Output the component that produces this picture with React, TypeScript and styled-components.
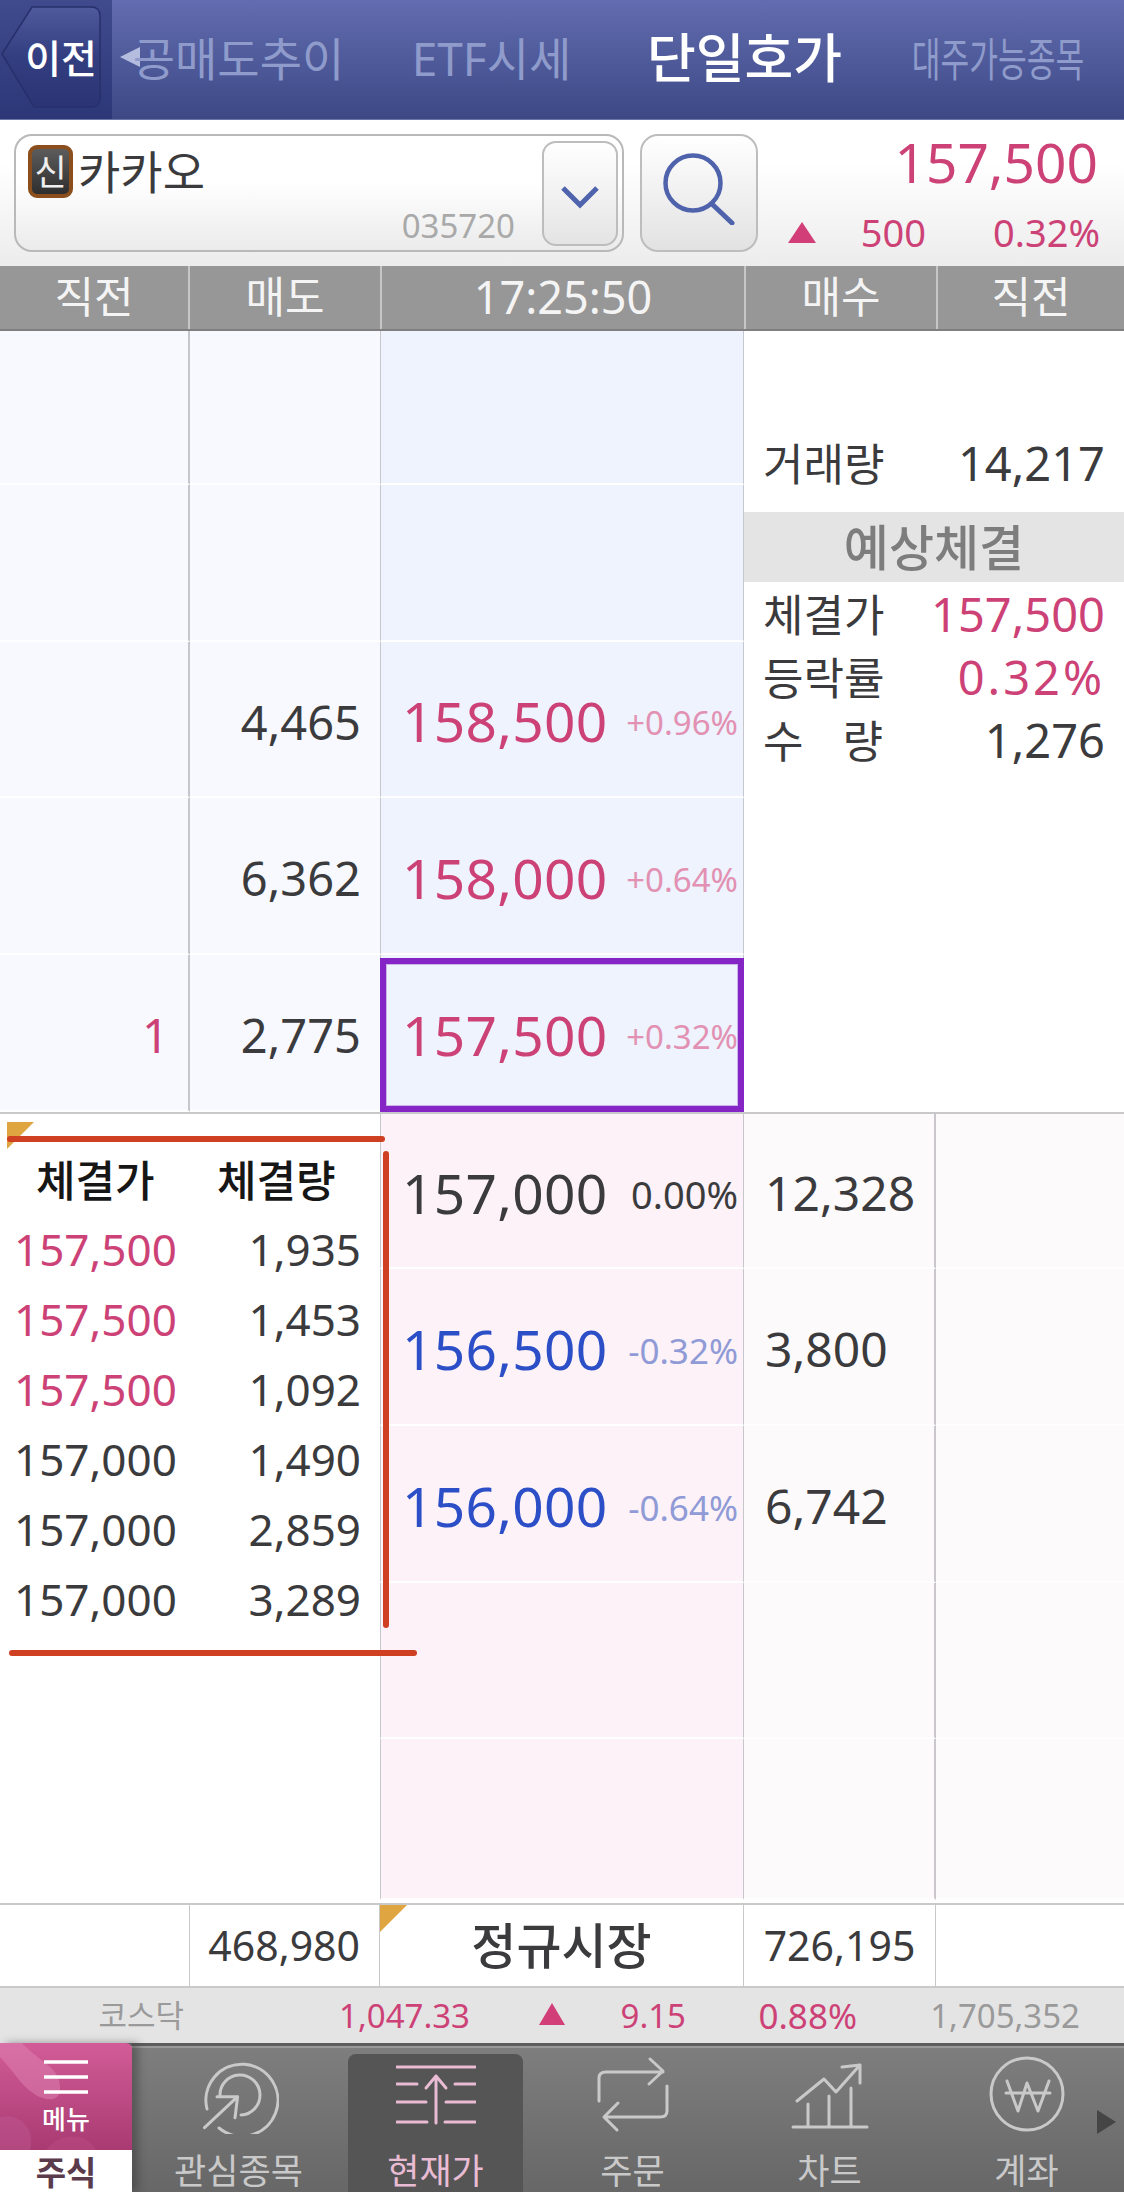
import React from "react";
import styled, { createGlobalStyle } from "styled-components";

const PINK = "#cd4276";
const BLUE = "#2c4fc8";
const INK = "#3b3b3d";
const GRID = "190px 190px 364px 192px 188px";

const GlobalStyle = createGlobalStyle`
  html, body {
    margin: 0;
    padding: 0;
    background: #fff;
  }
  * {
    box-sizing: border-box;
  }
`;

const Page = styled.div`
  width: 1124px;
  height: 2192px;
  overflow: hidden;
  display: flex;
  flex-direction: column;
  font-family: "Noto Sans", "Noto Sans CJK KR", sans-serif;
  color: ${INK};
`;

/* top tabs */
const TopNav = styled.div`
  height: 120px;
  flex: none;
  display: grid;
  grid-template-columns: 112px repeat(4, 253px);
  background: linear-gradient(#626cb0, #3c4985);
  border-bottom: 1px solid #6d76a8;
`;
const BackCell = styled.div`
  position: relative;
  display: flex;
  align-items: center;
  justify-content: flex-end;
  padding: 0 15px 5px 0;
  background: linear-gradient(#3f4b8c, #2c3778);
`;
const BackShape = styled.svg`
  position: absolute;
  left: 0;
  top: 0;
`;
const BackLabel = styled.span`
  position: relative;
  font-size: 39px;
  font-weight: 500;
  color: #fff;
  line-height: 1;
  white-space: nowrap;
`;
const NavItem = styled.div`
  position: relative;
  display: flex;
  align-items: center;
  justify-content: center;
  padding-bottom: 4px;
`;
const NavLabel = styled.span<{ $active?: boolean; $squeeze?: number }>`
  display: inline-block;
  white-space: nowrap;
  line-height: 1;
  font-size: ${(p) => (p.$active ? 53 : 46)}px;
  font-weight: ${(p) => (p.$active ? 500 : 400)};
  color: ${(p) => (p.$active ? "#fff" : "#8f9bcb")};
  transform: scaleX(${(p) => p.$squeeze ?? 1});
`;
const NavArrow = styled.i`
  position: absolute;
  left: 8px;
  top: 47px;
  width: 0;
  height: 0;
  border-style: solid;
  border-width: 10px 20px 10px 0;
  border-color: transparent rgba(215, 222, 245, 0.75) transparent transparent;
`;

/* search row */
const SearchBar = styled.div`
  height: 146px;
  flex: none;
  display: flex;
  padding: 14px 0 0 14px;
  background: linear-gradient(#fff 30%, #ececec);
`;
const StockBox = styled.div`
  position: relative;
  width: 610px;
  height: 118px;
  border: 2px solid #b9b9b9;
  border-radius: 18px;
  background: linear-gradient(#fff 40%, #ebebeb);
  display: flex;
`;
const StockMain = styled.div`
  flex: 1;
  display: flex;
  flex-direction: column;
  padding: 8px 0 0 12px;
`;
const StockName = styled.div`
  display: flex;
  align-items: center;
  gap: 5px;
  font-size: 46px;
  line-height: 54px;
`;
const CreditBadge = styled.span`
  width: 45px;
  height: 53px;
  display: flex;
  align-items: center;
  justify-content: center;
  border: 4px solid #8a4f1d;
  border-radius: 9px;
  background: linear-gradient(#5c5c5c, #2e2e2e);
  color: #eee;
  font-size: 35px;
  line-height: 1;
`;
const StockCode = styled.div`
  margin-top: 9px;
  padding-right: 27px;
  text-align: right;
  font-size: 33px;
  line-height: 38px;
  color: #a9a9a9;
`;
const ExpandButton = styled.div`
  width: 76px;
  height: 105px;
  margin: 5px 4px 0 0;
  border: 2px solid #bdbdbd;
  border-radius: 14px;
  background: linear-gradient(#fff, #e4e4e4);
  display: flex;
  align-items: center;
  justify-content: center;
  padding-top: 6px;
`;
const SearchButton = styled.div`
  width: 118px;
  height: 118px;
  margin-left: 16px;
  border: 2px solid #bdbdbd;
  border-radius: 18px;
  background: linear-gradient(#fff, #e2e2e2);
  display: flex;
  align-items: center;
  justify-content: center;
  padding-bottom: 8px;
`;
const Quote = styled.div`
  flex: 1;
  display: flex;
  flex-direction: column;
  color: ${PINK};
`;
const QuotePrice = styled.div`
  margin-top: -2px;
  padding-right: 26px;
  text-align: right;
  font-size: 55px;
  line-height: 60px;
`;
const QuoteChange = styled.div`
  display: grid;
  grid-template-columns: 28px 110px 174px;
  margin: 18px 0 0 30px;
  align-items: center;
  font-size: 38px;
  line-height: 44px;
  text-align: right;
`;
const Triangle = styled.i<{ $w: number; $h: number }>`
  display: block;
  width: 0;
  height: 0;
  border-style: solid;
  border-width: 0 ${(p) => p.$w / 2}px ${(p) => p.$h}px;
  border-color: transparent transparent #d23f78;
`;

/* table head */
const HeadRow = styled.div`
  height: 65px;
  flex: none;
  display: grid;
  grid-template-columns: 188px 192px 364px 192px 188px;
  background: #979797;
  border-bottom: 2px solid #7f7f7f;
`;
const HeadCell = styled.div`
  display: flex;
  align-items: center;
  justify-content: center;
  color: #f4f4f4;
  font-size: 43px;
  line-height: 1;
  border-left: 2px solid #c6c6c8;
  padding-bottom: 2px;
  &:first-child {
    border-left: 0;
  }
`;
const Clock = styled.span`
  font-size: 45px;
`;

/* ask side */
const AskBoard = styled.div`
  height: 783px;
  flex: none;
  display: grid;
  grid-template-columns: ${GRID};
  grid-template-rows: 154px 157px 156px 157px 157px;
  border-bottom: 2px solid #c9c9c9;
`;
const QtyCell = styled.div<{ $color?: string; $rule?: boolean }>`
  display: flex;
  align-items: center;
  justify-content: flex-end;
  padding: 6px 19px 0 0;
  background: #f7f9fe;
  border-right: ${(p) => (p.$rule ? "2px solid #c6c7cc" : "0")};
  border-bottom: 2px solid #fff;
  color: ${(p) => p.$color ?? INK};
  font-size: 47px;
  line-height: 1;
`;
const PriceCell = styled.div<{ $tone: string; $current?: boolean }>`
  position: relative;
  display: flex;
  align-items: center;
  justify-content: space-between;
  padding: 3px 5px 0 21px;
  background: ${(p) => p.$tone};
  border-left: 1px solid #c6c7cc;
  border-right: 1px solid #c6c7cc;
  border-bottom: 2px solid #fff;
  ${(p) =>
    p.$current &&
    `&::after {
      content: "";
      position: absolute;
      inset: 3px -1px -2px -1px;
      border: 6px solid #8625c5;
      box-shadow: inset 0 0 0 1px #cbb4ea;
    }`}
`;
const Price = styled.span<{ $color: string }>`
  color: ${(p) => p.$color};
  font-size: 55px;
  line-height: 1;
  letter-spacing: 0.3px;
`;
const Rate = styled.span<{ $color: string; $size: number }>`
  color: ${(p) => p.$color};
  font-size: ${(p) => p.$size}px;
  line-height: 1;
  padding-top: 4px;
`;
const SidePanel = styled.div`
  grid-column: 4 / 6;
  grid-row: 1 / 6;
  display: flex;
  flex-direction: column;
  background: #fff;
  padding-top: 101px;
`;
const SideRow = styled.div`
  display: flex;
  justify-content: space-between;
  align-items: center;
  height: 63px;
  padding: 0 19px;
  font-size: 44px;
  line-height: 1;
`;
const SpreadLabel = styled.span`
  width: 120px;
  display: flex;
  justify-content: space-between;
`;
const SideValue = styled.span<{ $pink?: boolean; $spread?: boolean }>`
  font-size: 47px;
  letter-spacing: ${(p) => (p.$spread ? "3px" : "0")};
  color: ${(p) => (p.$pink ? PINK : INK)};
`;
const SideBand = styled.div`
  height: 70px;
  margin: 17px 0 1px;
  display: flex;
  align-items: center;
  justify-content: center;
  background: #e4e4e4;
  color: #7d7d7d;
  font-size: 49px;
  font-weight: 500;
  line-height: 1;
`;

/* bid side */
const BidBoard = styled.div`
  height: 789px;
  flex: none;
  display: grid;
  grid-template-columns: 380px 364px 192px 188px;
  grid-template-rows: 155px 157px 157px 156px 161px;
`;
const TickPanel = styled.div`
  grid-column: 1;
  grid-row: 1 / 6;
  position: relative;
  background: #fff;
  padding: 40px 19px 0 14px;
`;
const TickHead = styled.div`
  display: grid;
  grid-template-columns: 22px 181px 1fr;
  height: 52px;
  align-items: center;
  color: #161616;
  font-size: 43px;
  font-weight: 500;
  line-height: 1;
  margin-bottom: 8px;
  white-space: nowrap;
`;
const TickRow = styled.div`
  display: flex;
  justify-content: space-between;
  align-items: center;
  height: 70px;
  font-size: 44px;
  line-height: 1;
`;
const TickPrice = styled.span<{ $pink: boolean }>`
  color: ${(p) => (p.$pink ? PINK : INK)};
`;
const Mark = styled.i`
  position: absolute;
  display: block;
  z-index: 3;
  background: #cf3f22;
  border-radius: 3px;
`;
const MarkTop = styled(Mark)`
  left: 7px;
  top: 22px;
  width: 378px;
  height: 6px;
`;
const MarkRight = styled(Mark)`
  left: 383px;
  top: 37px;
  width: 6px;
  height: 477px;
`;
const MarkBottom = styled(Mark)`
  left: 9px;
  top: 536px;
  width: 408px;
  height: 6px;
`;
const Corner = styled.i`
  position: absolute;
  width: 0;
  height: 0;
  border-style: solid;
  border-width: 27px 27px 0 0;
  border-color: #dfa540 transparent transparent transparent;
`;
const TickCorner = styled(Corner)`
  left: 7px;
  top: 8px;
`;
const BidQtyCell = styled.div`
  display: flex;
  align-items: center;
  padding: 4px 0 0 21px;
  background: #fdfafc;
  border-bottom: 2px solid #fffefe;
  border-right: 2px solid #cbc6cc;
  font-size: 48px;
  line-height: 1;
`;
const BidSpareCell = styled.div`
  background: #fdfafc;
  border-bottom: 2px solid #fffefe;
`;

/* totals */
const TotalRow = styled.div`
  height: 85px;
  flex: none;
  display: grid;
  grid-template-columns: ${GRID};
  border-top: 2px solid #c9c9c9;
  border-bottom: 2px solid #c9c9c9;
`;
const TotalCell = styled.div<{ $sell?: boolean }>`
  position: relative;
  display: flex;
  align-items: center;
  justify-content: ${(p) => (p.$sell ? "flex-end" : "center")};
  padding-right: ${(p) => (p.$sell ? "19px" : "0")};
  border-right: 1px solid #c9c9c9;
  font-size: 41px;
  line-height: 1;
  &:last-child {
    border-right: 0;
  }
`;
const MarketName = styled.span`
  font-size: 49px;
  font-weight: 500;
`;
const TotalCorner = styled(Corner)`
  left: 0;
  top: 0;
`;

/* index strip */
const IndexBar = styled.div`
  height: 55px;
  flex: none;
  display: grid;
  grid-template-columns: 184px 286px 95px 121px 171px 223px;
  align-items: center;
  background: #e4e4e4;
  font-size: 33px;
  line-height: 1;
  text-align: right;
  color: ${PINK};
`;
const IndexMuted = styled.span<{ $size?: number }>`
  color: #9a9a9a;
  font-size: ${(p) => p.$size ?? 33}px;
`;
const IndexRate = styled.span`
  font-size: 35px;
`;
const IndexMark = styled.span`
  display: flex;
  justify-content: flex-end;
  padding-bottom: 4px;
`;

/* bottom tabs */
const TabBar = styled.div`
  position: relative;
  flex: 1;
  display: flex;
  background: linear-gradient(#7e7e7e, #676767);
  border-top: 3px solid #5d5d5d;
  box-shadow: inset 0 2px 0 #9a9a9a;
`;
const MenuBlock = styled.div`
  width: 132px;
  margin-top: -3px;
  flex: none;
  display: flex;
  flex-direction: column;
  box-shadow: 6px 0 8px rgba(50, 50, 50, 0.45);
  z-index: 1;
`;
const MenuButton = styled.div`
  position: relative;
  height: 107px;
  display: flex;
  flex-direction: column;
  align-items: center;
  overflow: hidden;
  background: linear-gradient(#d25c97, #a93a72);
  color: #fff;
  padding-top: 17px;
  border-radius: 0 6px 0 0;
`;
const MenuSwirl = styled.svg`
  position: absolute;
  left: 0;
  top: 0;
`;
const MenuLines = styled.svg`
  position: relative;
  display: block;
`;
const MenuLabel = styled.span`
  position: relative;
  margin-top: 12px;
  font-size: 26px;
  font-weight: 500;
  line-height: 1;
`;
const StockTab = styled.div`
  flex: 1;
  display: flex;
  justify-content: center;
  align-items: center;
  padding-top: 2px;
  background: #fff;
  color: #5a3a4b;
  font-size: 33px;
  font-weight: 700;
  line-height: 1;
`;
const TabList = styled.div`
  display: grid;
  grid-template-columns: repeat(5, 197px);
  padding-left: 8px;
`;
const TabItem = styled.div<{ $active?: boolean }>`
  position: relative;
  display: flex;
  flex-direction: column;
  align-items: center;
  padding-top: 8px;
  color: ${(p) => (p.$active ? "#e9bcd4" : "#c9c9c9")};
  font-size: 35px;
  line-height: 1;
  ${(p) =>
    p.$active &&
    `&::before {
      content: "";
      position: absolute;
      left: 11px;
      right: 11px;
      top: 8px;
      bottom: 0;
      border-radius: 8px 8px 0 0;
      background: #555;
    }`}
`;
const TabIcon = styled.svg`
  position: relative;
  display: block;
  flex: none;
  fill: none;
  stroke: currentColor;
  stroke-width: 3;
  stroke-linecap: round;
  stroke-linejoin: round;
`;
const TabLabel = styled.span`
  position: relative;
  margin-top: 19px;
  white-space: nowrap;
`;
const MoreArrow = styled.i`
  position: absolute;
  left: 1097px;
  top: 64px;
  width: 0;
  height: 0;
  border-style: solid;
  border-width: 12px 0 12px 19px;
  border-color: transparent transparent transparent #454545;
`;

const askRows = [
  { qty: "", last: "", price: "", rate: "" },
  { qty: "", last: "", price: "", rate: "" },
  { qty: "4,465", last: "", price: "158,500", rate: "+0.96%" },
  { qty: "6,362", last: "", price: "158,000", rate: "+0.64%" },
  { qty: "2,775", last: "1", price: "157,500", rate: "+0.32%" },
];

const bidRows = [
  { price: "157,000", rate: "0.00%", qty: "12,328", color: INK, rateColor: INK, rateSize: 38 },
  { price: "156,500", rate: "-0.32%", qty: "3,800", color: BLUE, rateColor: "#8f9ad6", rateSize: 35 },
  { price: "156,000", rate: "-0.64%", qty: "6,742", color: BLUE, rateColor: "#8f9ad6", rateSize: 35 },
  { price: "", rate: "", qty: "", color: INK, rateColor: INK, rateSize: 35 },
  { price: "", rate: "", qty: "", color: INK, rateColor: INK, rateSize: 35 },
];

const ticks = [
  { price: "157,500", qty: "1,935", up: true },
  { price: "157,500", qty: "1,453", up: true },
  { price: "157,500", qty: "1,092", up: true },
  { price: "157,000", qty: "1,490", up: false },
  { price: "157,000", qty: "2,859", up: false },
  { price: "157,000", qty: "3,289", up: false },
];

const WatchIcon = () => (
  <TabIcon width="80" height="80" viewBox="0 0 80 80">
    <path d="M8 55 A36 36 0 1 1 20 74 M21 42 A20 20 0 1 1 42 61" />
    <path d="M5.5 73.7 L38.6 42.7 M18 42.7 H38.6 L36 63.7" />
  </TabIcon>
);

const QuoteIcon = () => (
  <TabIcon width="80" height="80" viewBox="0 0 80 80">
    <path d="M1 13 H79 M1 30 H21 M59 30 H79 M1 48 H30 M50 48 H79 M1 68 H31 M49 68 H79" />
    <path d="M40 22 V69 M30 34 L40 22 L50 34" />
  </TabIcon>
);

const OrderIcon = () => (
  <TabIcon width="80" height="80" viewBox="0 0 80 80">
    <path d="M6 47 V24 Q6 18 13 18 H70 M57 5 L70 17 L56 30" />
    <path d="M74 32 V57 Q74 63 67 63 H11 M25 49 L11 63 L24 76" />
  </TabIcon>
);

const ChartIcon = () => (
  <TabIcon width="80" height="80" viewBox="0 0 80 80">
    <path d="M3 73 H77 M18 50 V73 M39 42 V73 M61 34 V73" />
    <path d="M7 47 L34 25 L46 38 L70 11 M52 13 L70 11 V29" />
  </TabIcon>
);

const WonIcon = () => (
  <TabIcon width="80" height="80" viewBox="0 0 80 80">
    <circle cx="40" cy="40" r="36" />
    <path d="M20 27 L31 57 L40 29 L51 57 L62 27 M19 39 H63" />
  </TabIcon>
);

const tabs = [
  { label: "관심종목", icon: <WatchIcon /> },
  { label: "현재가", icon: <QuoteIcon />, active: true },
  { label: "주문", icon: <OrderIcon /> },
  { label: "차트", icon: <ChartIcon /> },
  { label: "계좌", icon: <WonIcon /> },
];

const App = () => {
  return (
    <Page>
      <GlobalStyle />
      <TopNav>
        <BackCell>
          <BackShape width="112" height="119" viewBox="0 0 112 119">
            <defs>
              <linearGradient id="backFill" x1="0" y1="0" x2="0" y2="1">
                <stop offset="0" stopColor="#4f5a9c" />
                <stop offset="0.5" stopColor="#333e80" />
                <stop offset="1" stopColor="#2b3575" />
              </linearGradient>
            </defs>
            <path
              d="M2 54 L32 7 H91 Q100 7 100 16 V98 Q100 107 91 107 H34 Z"
              fill="url(#backFill)"
              stroke="#26306c"
              strokeWidth="1.5"
            />
          </BackShape>
          <BackLabel>이전</BackLabel>
        </BackCell>
        <NavItem>
          <NavArrow />
          <NavLabel>공매도추이</NavLabel>
        </NavItem>
        <NavItem>
          <NavLabel>ETF시세</NavLabel>
        </NavItem>
        <NavItem>
          <NavLabel $active>단일호가</NavLabel>
        </NavItem>
        <NavItem>
          <NavLabel $squeeze={0.68}>대주가능종목</NavLabel>
        </NavItem>
      </TopNav>

      <SearchBar>
        <StockBox>
          <StockMain>
            <StockName>
              <CreditBadge>신</CreditBadge>
              카카오
            </StockName>
            <StockCode>035720</StockCode>
          </StockMain>
          <ExpandButton>
            <svg width="38" height="24" viewBox="0 0 38 24" fill="none">
              <path d="M2 3 L19 20 L36 3" stroke="#4f62ac" strokeWidth="5" />
            </svg>
          </ExpandButton>
        </StockBox>
        <SearchButton>
          <svg width="72" height="72" viewBox="0 0 72 72" fill="none" stroke="#4f62ac">
            <circle cx="30" cy="30" r="27.5" strokeWidth="4.5" />
            <path d="M49 51 L69 70" strokeWidth="5" strokeLinecap="round" />
          </svg>
        </SearchButton>
        <Quote>
          <QuotePrice>157,500</QuotePrice>
          <QuoteChange>
            <Triangle $w={28} $h={21} />
            <span>500</span>
            <span>0.32%</span>
          </QuoteChange>
        </Quote>
      </SearchBar>

      <HeadRow>
        <HeadCell>직전</HeadCell>
        <HeadCell>매도</HeadCell>
        <HeadCell>
          <Clock>17:25:50</Clock>
        </HeadCell>
        <HeadCell>매수</HeadCell>
        <HeadCell>직전</HeadCell>
      </HeadRow>

      <AskBoard>
        <SidePanel>
          <SideRow>
            거래량
            <SideValue>14,217</SideValue>
          </SideRow>
          <SideBand>예상체결</SideBand>
          <SideRow>
            체결가
            <SideValue $pink>157,500</SideValue>
          </SideRow>
          <SideRow>
            등락률
            <SideValue $pink $spread>
              0.32%
            </SideValue>
          </SideRow>
          <SideRow>
            <SpreadLabel>
              <span>수</span>
              <span>량</span>
            </SpreadLabel>
            <SideValue>1,276</SideValue>
          </SideRow>
        </SidePanel>
        {askRows.map((row, i) => (
          <React.Fragment key={i}>
            <QtyCell $rule $color={PINK}>
              {row.last}
            </QtyCell>
            <QtyCell>{row.qty}</QtyCell>
            <PriceCell $tone="#eef3fe" $current={i === 4}>
              <Price $color={PINK}>{row.price}</Price>
              <Rate $color="#e291b3" $size={33}>
                {row.rate}
              </Rate>
            </PriceCell>
          </React.Fragment>
        ))}
      </AskBoard>

      <BidBoard>
        <TickPanel>
          <TickCorner />
          <MarkTop />
          <MarkRight />
          <MarkBottom />
          <TickHead>
            <span />
            <span>체결가</span>
            <span>체결량</span>
          </TickHead>
          {ticks.map((t, i) => (
            <TickRow key={i}>
              <TickPrice $pink={t.up}>{t.price}</TickPrice>
              <span>{t.qty}</span>
            </TickRow>
          ))}
        </TickPanel>
        {bidRows.map((row, i) => (
          <React.Fragment key={i}>
            <PriceCell $tone="#fcf2f7">
              <Price $color={row.color}>{row.price}</Price>
              <Rate $color={row.rateColor} $size={row.rateSize}>
                {row.rate}
              </Rate>
            </PriceCell>
            <BidQtyCell>{row.qty}</BidQtyCell>
            <BidSpareCell />
          </React.Fragment>
        ))}
      </BidBoard>

      <TotalRow>
        <TotalCell />
        <TotalCell $sell>468,980</TotalCell>
        <TotalCell>
          <TotalCorner />
          <MarketName>정규시장</MarketName>
        </TotalCell>
        <TotalCell>726,195</TotalCell>
        <TotalCell />
      </TotalRow>

      <IndexBar>
        <IndexMuted $size={31}>코스닥</IndexMuted>
        <span>1,047.33</span>
        <IndexMark>
          <Triangle $w={26} $h={22} />
        </IndexMark>
        <span>9.15</span>
        <IndexRate>0.88%</IndexRate>
        <IndexMuted>1,705,352</IndexMuted>
      </IndexBar>

      <TabBar>
        <MenuBlock>
          <MenuButton>
            <MenuSwirl width="132" height="107" viewBox="0 0 132 107">
              <path
                d="M0 0 H22 C40 20 62 24 60 48 C58 62 36 58 20 38 C12 28 4 18 0 14 Z"
                fill="#e38ab8"
                opacity="0.45"
              />
              <path d="M0 74 C18 70 36 84 30 107 H0 Z" fill="#bd5590" opacity="0.5" />
              <path d="M46 107 C58 90 86 88 96 107 Z" fill="#bd4f86" opacity="0.4" />
            </MenuSwirl>
            <MenuLines width="44" height="34" viewBox="0 0 44 34">
              <path d="M0 2 H44 M0 17 H44 M0 32 H44" stroke="#fff" strokeWidth="3.5" />
            </MenuLines>
            <MenuLabel>메뉴</MenuLabel>
          </MenuButton>
          <StockTab>주식</StockTab>
        </MenuBlock>
        <TabList>
          {tabs.map((tab) => (
            <TabItem key={tab.label} $active={tab.active}>
              {tab.icon}
              <TabLabel>{tab.label}</TabLabel>
            </TabItem>
          ))}
        </TabList>
        <MoreArrow />
      </TabBar>
    </Page>
  );
};

export default App;
